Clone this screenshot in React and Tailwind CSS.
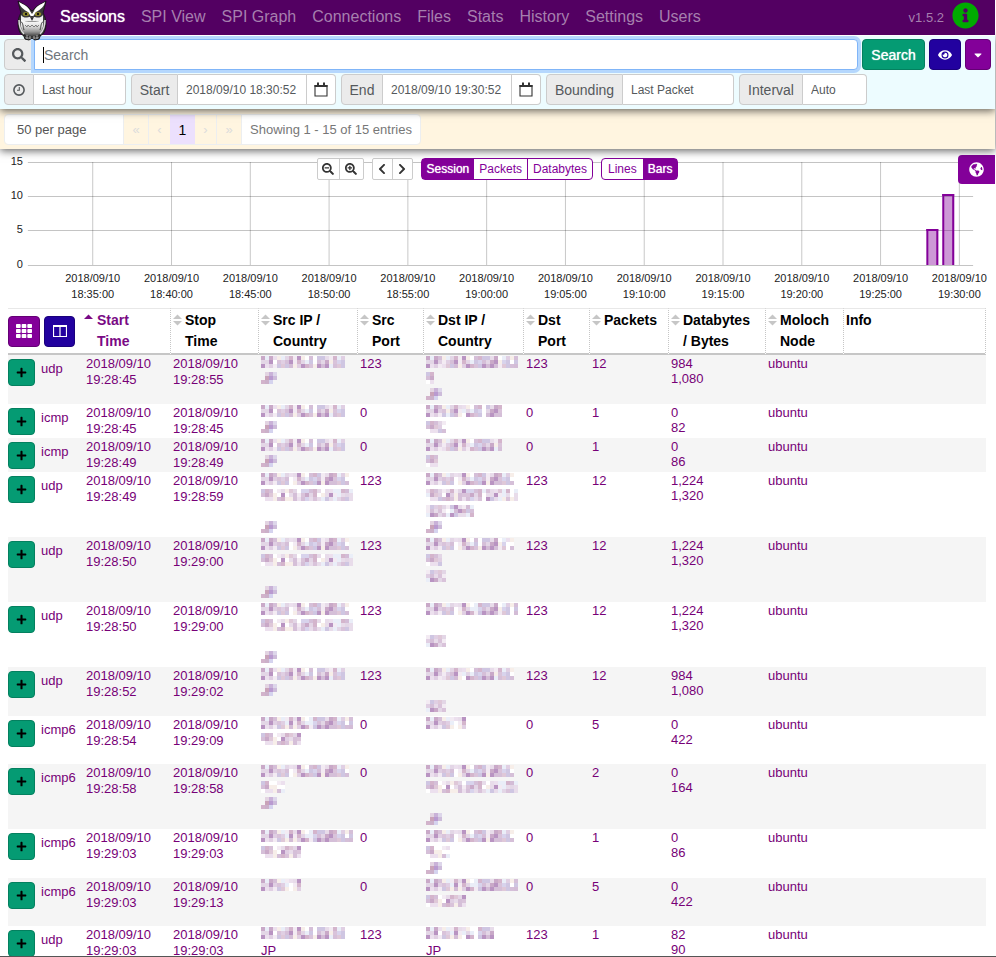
import { FaSearch, FaEye, FaCaretDown, FaTh, FaGlobeAmericas, FaInfoCircle, FaPlus, FaSearchMinus, FaSearchPlus, FaChevronLeft, FaChevronRight } from 'react-icons/fa'

const navItems = ['Sessions', 'SPI View', 'SPI Graph', 'Connections', 'Files', 'Stats', 'History', 'Settings', 'Users']

const ticks = [
  '18:35:00', '18:40:00', '18:45:00', '18:50:00', '18:55:00', '19:00:00',
  '19:05:00', '19:10:00', '19:15:00', '19:20:00', '19:25:00', '19:30:00'
]

const columns = [
  { label: 'Start\nTime', width: 'w-[87px]', sort: 'asc' },
  { label: 'Stop\nTime', width: 'w-[88px]', sort: 'both' },
  { label: 'Src IP /\nCountry', width: 'w-[99px]', sort: 'both' },
  { label: 'Src\nPort', width: 'w-[66px]', sort: 'both' },
  { label: 'Dst IP /\nCountry', width: 'w-[100px]', sort: 'both' },
  { label: 'Dst\nPort', width: 'w-[66px]', sort: 'both' },
  { label: 'Packets', width: 'w-[79px]', sort: 'both' },
  { label: 'Databytes\n/ Bytes', width: 'w-[97px]', sort: 'both' },
  { label: 'Moloch\nNode', width: 'w-[78px]', sort: 'both' },
  { label: 'Info', width: '', sort: 'none' }
]

// Masked addresses: one string per text line, # is an inked cell, - a faint one
const V4 = '###-####-####-###-###'
const V6A = '#######-#######-######'
const V6B = '###-##-##-#####-##-####'
const LOCAL = '######-#####-##########'
const TAIL = '###-######'

const sessions = [
  { proto: 'udp', start: '19:28:45', stop: '19:28:55', src: [V4, 'JP'], sport: 123, dst: ['####-###-#########-####', '##', 'JP'], dport: 123, packets: 12, data: '984', bytes: '1,080' },
  { proto: 'icmp', start: '19:28:45', stop: '19:28:45', src: [V4, 'JP'], sport: 0, dst: ['#####-###-#### ####', '#####'], dport: 0, packets: 1, data: '0', bytes: '82' },
  { proto: 'icmp', start: '19:28:49', stop: '19:28:49', src: [V4, 'JP'], sport: 0, dst: ['####-#####-######-#', '###'], dport: 0, packets: 1, data: '0', bytes: '86' },
  { proto: 'udp', start: '19:28:49', stop: '19:28:59', src: [V6A, V6B, '', 'JP'], sport: 123, dst: [V6A, '-######-######-####-#-#', '-####-######', 'JP'], dport: 123, packets: 12, data: '1,224', bytes: '1,320' },
  { proto: 'udp', start: '19:28:50', stop: '19:29:00', src: [V6A, V6B, '', 'JP'], sport: 123, dst: ['#######-#####-####-#-#', '####', '#####', ''], dport: 123, packets: 12, data: '1,224', bytes: '1,320' },
  { proto: 'udp', start: '19:28:50', stop: '19:29:00', src: [V6A, V6B, '', 'JP'], sport: 123, dst: ['#######-####-#####-##-#', '', '#####', ''], dport: 123, packets: 12, data: '1,224', bytes: '1,320' },
  { proto: 'udp', start: '19:28:52', stop: '19:29:02', src: [V4, 'JP'], sport: 123, dst: ['####-####-#######-####', '', '#####'], dport: 123, packets: 12, data: '984', bytes: '1,080' },
  { proto: 'icmp6', start: '19:28:54', stop: '19:29:09', src: [LOCAL, TAIL, ''], sport: 0, dst: ['######--##'], dport: 0, packets: 5, data: '0', bytes: '422' },
  { proto: 'icmp6', start: '19:28:58', stop: '19:28:58', src: [V6A, '##--#-', 'JP'], sport: 0, dst: [V6A, V6B, '', 'JP'], dport: 0, packets: 2, data: '0', bytes: '164' },
  { proto: 'icmp6', start: '19:29:03', stop: '19:29:03', src: [LOCAL, TAIL], sport: 0, dst: [V6A, '##--#-', 'JP'], dport: 0, packets: 1, data: '0', bytes: '86' },
  { proto: 'icmp6', start: '19:29:03', stop: '19:29:13', src: ['######--##', '', ''], sport: 0, dst: [LOCAL, TAIL], dport: 0, packets: 5, data: '0', bytes: '422' },
  { proto: 'udp', start: '19:29:03', stop: '19:29:03', src: [V4], srcCountry: 'JP', sport: 123, dst: ['###-##-##-## ####'], dstCountry: 'JP', dport: 123, packets: 1, data: '82', bytes: '90' }
]

const inks = ['#d3bcd6', '#d5bfd8', '#e0cfe3', '#b994c2', '#d9c3da', '#cfc6e2', '#dfc8d8', '#e8dcea', '#c9a9c8', '#d4b5cc', '#e3d6e6', '#d8d3ec']
const faints = ['#f3ebf3', '#ece0ee', '#eaeef8', '#f7eee9', '#ffffff']

const country = [
  [null, '#e3d4e2', '#c9b2d8', '#ddd6ea'],
  [null, '#c9a3b9', '#b99ad0', '#cdbcda'],
  ['#d2b3cb', '#cbb0c9', '#d5d3ee', null]
]

function hash(c, r, l) {
  let h = Math.imul(c + 1, 374761393) + Math.imul(r + 1, 668265263) + Math.imul(l + 1, 1274126177)
  h = Math.imul(h ^ (h >>> 13), 1103515245)
  return (h ^ (h >>> 16)) >>> 0
}

function Mosaic({ lines }) {
  const cells = []
  lines.forEach((line, l) => {
    if (line === 'JP') {
      country.forEach((row, r) => row.forEach((fill, c) => {
        if (fill) cells.push({ x: c * 4, y: l * 16 + r * 4, fill })
      }))
      return
    }
    line.split('').forEach((ch, c) => {
      if (ch === ' ') return
      for (let r = 0; r < 3; r++) {
        const n = hash(c, r, l)
        const faint = ch === '-' || n % 5 === 0
        cells.push({ x: c * 4, y: l * 16 + r * 4, fill: faint ? faints[(n >>> 4) % faints.length] : inks[(n >>> 4) % inks.length] })
      }
    })
  })
  const height = lines.length * 16 - (lines[lines.length - 1] === '' ? 1 : 0)
  return (
    <svg width="96" height={height} className="block" shapeRendering="crispEdges" aria-hidden="true">
      {cells.map((cell, i) => <rect key={i} x={cell.x} y={cell.y} width="4" height="4" fill={cell.fill} />)}
    </svg>
  )
}

function Owl() {
  return (
    <svg viewBox="0 0 30 41" className="w-[30px] h-[41px]" aria-hidden="true">
      <defs>
        <linearGradient id="belly" x1="0" y1="0" x2="0" y2="1">
          <stop offset="0" stopColor="#fff" />
          <stop offset="0.35" stopColor="#e2e2e2" />
          <stop offset="0.7" stopColor="#999" />
          <stop offset="1" stopColor="#3c3c3c" />
        </linearGradient>
      </defs>
      <path d="M6 34 L8 39 L12 40 L15 38 L18 40 L22 39 L24 34z" fill="#666" stroke="#111" />
      <path d="M1 1 C2 6 3 9 4 13 C0 19 0 29 4 34 C8 38 22 38 26 34 C30 29 30 19 26 13 C27 9 28 6 29 1 C25 4 20 5 17 9 L15 11 L13 9 C10 5 5 4 1 1z" fill="#3a3a3a" stroke="#111" strokeWidth="0.8" />
      <path d="M2 2 C7 5 11 6 13 11 L15 14 L17 11 C19 6 23 5 28 2 C27 7 24 9 19 12 L15 18 L11 12 C6 9 3 7 2 2z" fill="#fff" />
      <path d="M4 15 C7 19 11 17 13 17 L15 21 L17 17 C19 17 23 19 26 15 L26 21 H4z" fill="#eee" />
      <ellipse cx="9" cy="14" rx="3.2" ry="2" fill="#8f8a2c" />
      <ellipse cx="21" cy="14" rx="3.2" ry="2" fill="#8f8a2c" />
      <circle cx="9" cy="14" r="1.2" fill="#111" />
      <circle cx="21" cy="14" r="1.2" fill="#111" />
      <path d="M4 20 C9 22 21 22 26 20 C27 27 25 32 21 35 C18 37 12 37 9 35 C5 32 3 27 4 20z" fill="url(#belly)" />
      <path d="M2 20 C2 28 4 31 7 34 M28 20 C28 28 26 31 23 34" fill="none" stroke="#ddd" strokeWidth="1.5" />
      <path d="M4 22 C6 22 6 27 7 30 M26 22 C24 22 24 27 23 30" fill="none" stroke="#333" strokeWidth="0.9" />
      <path d="M8 25 l2 2 1-2 2 2 2-2 2 2 2-2 1 2 2-2" fill="none" stroke="#666" strokeWidth="0.8" />
      <path d="M14 16 L15 20 L16 16z" fill="#222" />
      <path d="M10 35v4 M13 36v3 M17 36v3 M20 35v4" stroke="#bbb" strokeWidth="0.9" />
    </svg>
  )
}

function ClockIcon() {
  return (
    <svg viewBox="0 0 12 12" className="w-3 h-3" fill="none" stroke="currentColor" strokeWidth="1.6" aria-hidden="true">
      <circle cx="6" cy="6" r="5.1" />
      <path d="M6.3 3v3.3H4" strokeWidth="1.1" />
    </svg>
  )
}

function CalendarIcon() {
  return (
    <svg viewBox="0 0 14 15" className="w-[14px] h-[15px]" aria-hidden="true">
      <path d="M1 3.5h12V14H1z" fill="#fff" stroke="#333" strokeWidth="1.1" />
      <path d="M0.5 3h13v2h-13zM3 0.5h2v3H3zM9 0.5h2v3H9z" fill="#333" />
    </svg>
  )
}

function ColumnsIcon() {
  return (
    <svg viewBox="0 0 14 12" className="w-[14px] h-3" fill="none" stroke="currentColor" aria-hidden="true">
      <path d="M0.5 1v10.5h13V1zM7 1v10.5" strokeWidth="1.2" />
      <path d="M0 1h14" strokeWidth="2" />
    </svg>
  )
}

function SortIcon({ sort }) {
  return (
    <svg viewBox="0 0 9 12" className="w-[9px] h-3 mt-1 shrink-0" aria-hidden="true">
      <path d="M0 5 L4.5 0.5 L9 5z" fill={sort === 'asc' ? '#7a0a85' : '#c6c6c6'} />
      {sort === 'both' && <path d="M0 7 L4.5 11.5 L9 7z" fill="#c6c6c6" />}
    </svg>
  )
}

const addon = 'flex items-center justify-center bg-[#ebebeb] border border-[#ccc] rounded-l text-sm text-[#55595c]'
const field = 'h-[31px] border border-l-0 border-[#ccc] bg-white text-xs text-[#55595c] pl-2 appearance-none outline-none'

function DateField({ id, label, value, addonWidth }) {
  return (
    <div className="flex h-[31px]">
      <label htmlFor={id} className={`${addon} ${addonWidth}`}>{label}</label>
      <input id={id} defaultValue={value} className={`${field} w-[129px]`} />
      <button aria-label={`Pick ${label} date`} className="w-[29px] flex items-center justify-center bg-white border border-l-0 border-[#ccc] rounded-r">
        <CalendarIcon />
      </button>
    </div>
  )
}

function Chart() {
  const lines = [[15, 13], [10, 47], [5, 81], [0, 116]]
  const tickX = (i) => `${9.32 + i * 7.918}%`
  return (
    <div className="relative h-[159px]">
      <svg className="w-full h-[159px] block" fontSize="11" fill="#222">
        {lines.map(([value, y]) => (
          <g key={value}>
            <line x1="2.8%" x2="97.8%" y1={y + 0.5} y2={y + 0.5} stroke="#c4c4c4" />
            <text x="2.3%" y={y + 3} textAnchor="end">{value}</text>
          </g>
        ))}
        {ticks.map((time, i) => (
          <g key={time}>
            <line x1={tickX(i)} x2={tickX(i)} y1="13" y2="116" stroke="#000" strokeOpacity="0.22" />
            <text x={tickX(i)} y="133" textAnchor="middle">2018/09/10</text>
            <text x={tickX(i)} y="149" textAnchor="middle">{time}</text>
          </g>
        ))}
        <g fill="#830099" fillOpacity="0.4">
          <rect x="93.2%" y="82" width="1.1%" height="34" />
          <rect x="94.8%" y="47" width="1.1%" height="69" />
        </g>
        <g stroke="#830099" strokeWidth="2">
          <line x1="93.2%" x2="93.2%" y1="80" y2="116" />
          <line x1="94.2%" x2="94.2%" y1="80" y2="116" />
          <line x1="93.1%" x2="94.3%" y1="81" y2="81" />
          <line x1="94.8%" x2="94.8%" y1="45" y2="116" />
          <line x1="95.8%" x2="95.8%" y1="45" y2="116" />
          <line x1="94.7%" x2="95.9%" y1="46" y2="46" />
        </g>
      </svg>

      <div className="absolute top-[9px] inset-x-0 flex justify-center gap-2 text-xs">
        <div className="flex h-[22px] border border-[#ccc] rounded-xs bg-white text-[#333]">
          <button aria-label="Zoom out" className="w-[22px] flex items-center justify-center border-r border-[#ccc]"><FaSearchMinus /></button>
          <button aria-label="Zoom in" className="w-[23px] flex items-center justify-center"><FaSearchPlus /></button>
        </div>
        <div className="flex h-[22px] border border-[#ccc] rounded-xs bg-white text-[#333]">
          <button aria-label="Earlier" className="w-5 flex items-center justify-center border-r border-[#ccc]"><FaChevronLeft /></button>
          <button aria-label="Later" className="w-[19px] flex items-center justify-center"><FaChevronRight /></button>
        </div>
        <div className="flex h-[22px] border border-[#830099] rounded-sm bg-white text-[#830099]">
          <button className="px-[5px] bg-[#830099] text-white [text-shadow:0_0_1px_#fff]">Session</button>
          <button className="px-[5px] border-r border-[#830099]">Packets</button>
          <button className="px-[5px]">Databytes</button>
        </div>
        <div className="flex h-[22px] border border-[#830099] rounded-sm bg-white text-[#830099]">
          <button className="px-1.5">Lines</button>
          <button className="px-[5px] bg-[#830099] text-white [text-shadow:0_0_1px_#fff]">Bars</button>
        </div>
      </div>
      <button aria-label="Show map" className="absolute top-[6px] right-0 w-[37px] h-[29px] flex items-center justify-center bg-[#830099] rounded-l text-white text-[15px]">
        <FaGlobeAmericas />
      </button>
    </div>
  )
}

const App = () => {
  return (
    <div className="h-screen overflow-hidden bg-white pr-px border-b border-[#555] font-['Liberation_Sans',Arial,sans-serif] text-[13px]">
      {/* Navbar */}
      <nav className="relative z-30 h-[35px] bg-[#530062] flex items-start pl-[17px] pr-4">
        <a href="#home" aria-label="Home" className="shrink-0 mr-[13px]"><Owl /></a>
        <div className="flex items-center gap-4 h-[33px] text-base text-[#a67fae]">
          {navItems.map((item, i) => (
            <a key={item} href="#nav" className={i === 0 ? 'text-white [text-shadow:0_0_1px_#fff]' : ''}>{item}</a>
          ))}
        </div>
        <div className="ml-auto flex items-center gap-2 h-[31px] text-[#a67fae]">
          <span className="pt-1">v1.5.2</span>
          <FaInfoCircle className="text-[27px] text-[#00aa00]" />
        </div>
      </nav>

      {/* Search form */}
      <form className="relative z-20 bg-[#edfcff] border-t border-white px-1 pt-[3px] pb-1 shadow-[0_2px_8px_rgba(0,0,0,0.6)]" onSubmit={(e) => e.preventDefault()}>
        <div className="flex gap-1 h-[31px]">
          <div className="flex flex-1">
            <label htmlFor="query" aria-label="Search" className={`${addon} w-[30px]`}><FaSearch /></label>
            <div className="flex flex-1 items-center bg-white border border-[#80b5f8] rounded-r pl-2 shadow-[0_0_0_3px_#b5d7fd]">
              <span className="w-px h-4 bg-black" />
              <input id="query" placeholder="Search" className="flex-1 text-sm outline-none placeholder:text-[#6f767d]" />
            </div>
          </div>
          <button className="w-[63px] bg-[#059b73] border border-[#04805f] rounded text-sm text-white [text-shadow:0_0_1px_#fff]">Search</button>
          <button aria-label="Views" className="w-8 flex items-center justify-center bg-[#22019f] border border-[#1a007c] rounded text-sm text-white"><FaEye /></button>
          <button aria-label="Actions" className="w-[26px] flex items-center justify-center bg-[#830099] border border-[#640075] rounded text-xs text-white"><FaCaretDown /></button>
        </div>
        <div className="flex gap-[5px] mt-1">
          <div className="flex h-[31px]">
            <label htmlFor="range" aria-label="Time range" className={`${addon} w-[30px]`}><ClockIcon /></label>
            <select id="range" className={`${field} w-[92px] rounded-r`}><option>Last hour</option></select>
          </div>
          <DateField id="start" label="Start" value="2018/09/10 18:30:52" addonWidth="w-[47px]" />
          <DateField id="end" label="End" value="2018/09/10 19:30:52" addonWidth="w-[42px]" />
          <div className="flex h-[31px]">
            <label htmlFor="bounding" className={`${addon} w-[77px]`}>Bounding</label>
            <select id="bounding" className={`${field} w-[111px] rounded-r`}><option>Last Packet</option></select>
          </div>
          <div className="flex h-[31px]">
            <label htmlFor="interval" className={`${addon} w-[64px]`}>Interval</label>
            <select id="interval" className={`${field} w-[64px] rounded-r`}><option>Auto</option></select>
          </div>
        </div>
      </form>

      {/* Paging */}
      <div className="relative z-10 flex h-10 items-center bg-[#fff5e0] px-1 pt-px shadow-[0_2px_8px_rgba(0,0,0,0.6)]">
        <div className="flex h-[31px] border border-[#eceef0] rounded text-[#555]">
          <select aria-label="Page size" className="w-[118px] pl-3 bg-white rounded-l appearance-none outline-none">
            <option>50 per page</option>
          </select>
          <button aria-label="First page" className="w-[25px] border-l border-[#eceef0] text-[#dcdcdc]">«</button>
          <button aria-label="Previous page" className="w-[22px] border-l border-[#eceef0] text-[#dcdcdc]">‹</button>
          <button className="w-[25px] bg-[#ece0fd] text-sm text-black">1</button>
          <button aria-label="Next page" className="w-[21px] text-[#dcdcdc]">›</button>
          <button aria-label="Last page" className="w-[25px] border-l border-[#eceef0] text-[#dcdcdc]">»</button>
          <span className="flex items-center px-2 bg-white border-l border-[#eceef0] rounded-r text-[#777]">Showing 1 - 15 of 15 entries</span>
        </div>
      </div>

      <Chart />

      {/* Sessions table */}
      <div className="pl-2 pr-[9px]">
        <table className="w-full table-fixed border-separate border-spacing-0 text-left leading-4 text-[#770077]">
          <thead>
            <tr className="text-sm leading-[21px] text-black">
              <th className="w-[76px] border-t border-t-[#e8e8e8] border-b-2 border-b-[#c6c6c6] align-middle">
                <div className="flex gap-1">
                  <button aria-label="Toggle columns" className="w-8 h-[31px] flex items-center justify-center bg-[#830099] border border-[#640075] rounded text-base text-white"><FaTh /></button>
                  <button aria-label="Column layouts" className="w-[31px] h-[31px] flex items-center justify-center bg-[#22019f] border border-[#1a007c] rounded text-white"><ColumnsIcon /></button>
                </div>
              </th>
              {columns.map((col) => (
                <th key={col.label} className={`${col.width} border-t border-t-[#e8e8e8] border-b-2 border-b-[#c6c6c6] border-r border-r-[#c6c6c6] [border-right-style:dotted] py-px align-top`}>
                  <div className={col.sort === 'asc' ? 'flex gap-1 text-[#7a0a85]' : 'flex gap-[3px] pl-0.5'}>
                    {col.sort !== 'none' && <SortIcon sort={col.sort} />}
                    <span className="whitespace-pre-line">{col.label}</span>
                  </div>
                </th>
              ))}
            </tr>
          </thead>
          <tbody>
            {sessions.map((s, i) => (
              <tr key={i} className="align-top odd:bg-[#f5f5f5] [&>td]:pt-px [&>td]:px-0.5">
                <td>
                  <div className="flex gap-[6px] -ml-0.5 pt-[3px] pb-[3px]">
                    <button aria-label="Show session" className="w-[27px] h-[27px] shrink-0 flex items-center justify-center bg-[#059b73] border border-[#04805f] rounded-sm text-[11px] text-black"><FaPlus /></button>
                    <span className="pt-0.5">{s.proto}</span>
                  </div>
                </td>
                <td>2018/09/10<br />{s.start}</td>
                <td>2018/09/10<br />{s.stop}</td>
                <td className="leading-[15px]"><Mosaic lines={s.src} />{s.srcCountry}</td>
                <td>{s.sport}</td>
                <td className="leading-[15px]"><Mosaic lines={s.dst} />{s.dstCountry}</td>
                <td>{s.dport}</td>
                <td>{s.packets}</td>
                <td className="leading-[15px]">{s.data}<br />{s.bytes}</td>
                <td>ubuntu</td>
                <td></td>
              </tr>
            ))}
          </tbody>
        </table>
      </div>
    </div>
  )
}

export default App
